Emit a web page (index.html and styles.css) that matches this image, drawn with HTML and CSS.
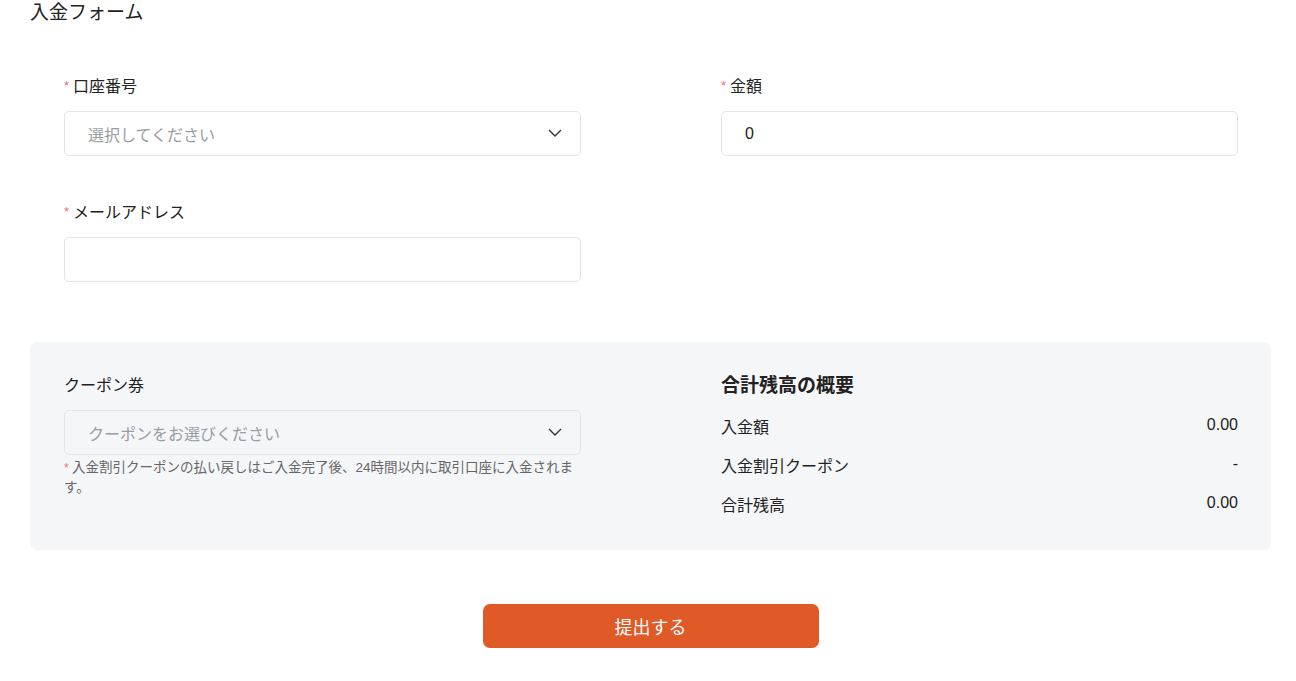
FILE: index.html
```html
<!DOCTYPE html>
<html lang="ja">
<head>
<meta charset="utf-8">
<title>入金フォーム</title>
<link rel="stylesheet" href="styles.css">
</head>
<body>
<div class="page">
  <h1 class="title">入金フォーム</h1>

  <div class="form-grid">
    <div class="field">
      <label class="label"><span class="req">*</span>口座番号</label>
      <div class="control select">
        <span class="placeholder">選択してください</span>
        <svg class="chev" width="14" height="8" viewBox="0 0 14 8"><path d="M1 1 L7 7 L13 1" fill="none" stroke="#333" stroke-width="1.4"/></svg>
      </div>
    </div>
    <div class="field">
      <label class="label"><span class="req">*</span>金額</label>
      <div class="control">
        <span class="value">0</span>
      </div>
    </div>
    <div class="field">
      <label class="label"><span class="req">*</span>メールアドレス</label>
      <div class="control"></div>
    </div>
  </div>

  <div class="panel">
    <div class="coupon">
      <label class="label">クーポン券</label>
      <div class="control select gray">
        <span class="placeholder">クーポンをお選びください</span>
        <svg class="chev" width="14" height="8" viewBox="0 0 14 8"><path d="M1 1 L7 7 L13 1" fill="none" stroke="#333" stroke-width="1.4"/></svg>
      </div>
      <p class="note">入金割引クーポンの払い戻しはご入金完了後、24時間以内に取引口座に入金されます。</p>
    </div>
    <div class="summary">
      <h2 class="summary-title">合計残高の概要</h2>
      <div class="row"><span>入金額</span><span class="num">0.00</span></div>
      <div class="row"><span>入金割引クーポン</span><span class="num">-</span></div>
      <div class="row"><span>合計残高</span><span class="num">0.00</span></div>
    </div>
  </div>

  <div class="actions">
    <button class="submit" type="button">提出する</button>
  </div>
</div>
</body>
</html>
```

FILE: styles.css
```css
* { box-sizing: border-box; }
html, body { margin: 0; padding: 0; background: #fff; }
body {
  font-family: "Liberation Sans", "Noto Sans CJK JP", sans-serif;
  color: #222;
}
.page {
  width: 1241px;
  margin-left: 30px;
}
.title {
  margin: 0;
  font-size: 19px;
  font-weight: normal;
  line-height: 26px;
  height: 26px;
  color: #222;
}
.form-grid {
  display: grid;
  grid-template-columns: 517px 517px;
  column-gap: 140px;
  row-gap: 45px;
  padding: 49px 34px 0 34px;
}
.field { display: flex; flex-direction: column; }
.label {
  font-size: 16px;
  line-height: 24px;
  height: 24px;
  color: #222;
  margin-bottom: 12px;
  display: flex;
  align-items: center;
}
.req {
  color: #f56c6c;
  font-size: 13px;
  line-height: 1;
  margin-right: 4px;
  position: relative;
  top: -2px;
}
.control {
  height: 45px;
  border: 1px solid #e2e4e8;
  border-radius: 5px;
  background: #fff;
  display: flex;
  align-items: center;
  padding: 0 18px 0 23px;
}
.control.gray { background: #f5f6f8; }
.select { justify-content: space-between; }
.placeholder { color: #9a9ca1; font-size: 16px; }
.value { font-size: 16px; color: #222; }
.chev { display: block; position: relative; top: -1px; }
.panel {
  margin-top: 60px;
  background: #f5f6f8;
  border-radius: 7px;
  padding: 30px 33px 32px 34px;
  display: grid;
  grid-template-columns: 517px 517px;
  column-gap: 140px;
  align-items: start;
}
.coupon { display: flex; flex-direction: column; padding-top: 2px; }
.note {
  margin: 3px 0 0 0;
  font-size: 13.5px;
  line-height: 20px;
  color: #666;
}
.note::before {
  content: "* ";
  color: #f56c6c;
  font-size: 12px;
}
.summary { padding-top: 1px; }
.summary-title {
  margin: 0;
  font-size: 19px;
  font-weight: bold;
  line-height: 26px;
  height: 26px;
  color: #222;
}
.row {
  display: flex;
  justify-content: space-between;
  font-size: 16px;
  line-height: 24px;
  height: 24px;
  margin-top: 15px;
  color: #222;
}
.summary-title + .row { margin-top: 17px; }
.num { position: relative; top: -3px; }
.actions {
  display: flex;
  justify-content: center;
  padding-top: 54px;
}
.submit {
  width: 336px;
  height: 44px;
  border: 0;
  border-radius: 7px;
  background: #e05a28;
  color: #fff;
  font-family: inherit;
  font-size: 18px;
  cursor: pointer;
}
```
